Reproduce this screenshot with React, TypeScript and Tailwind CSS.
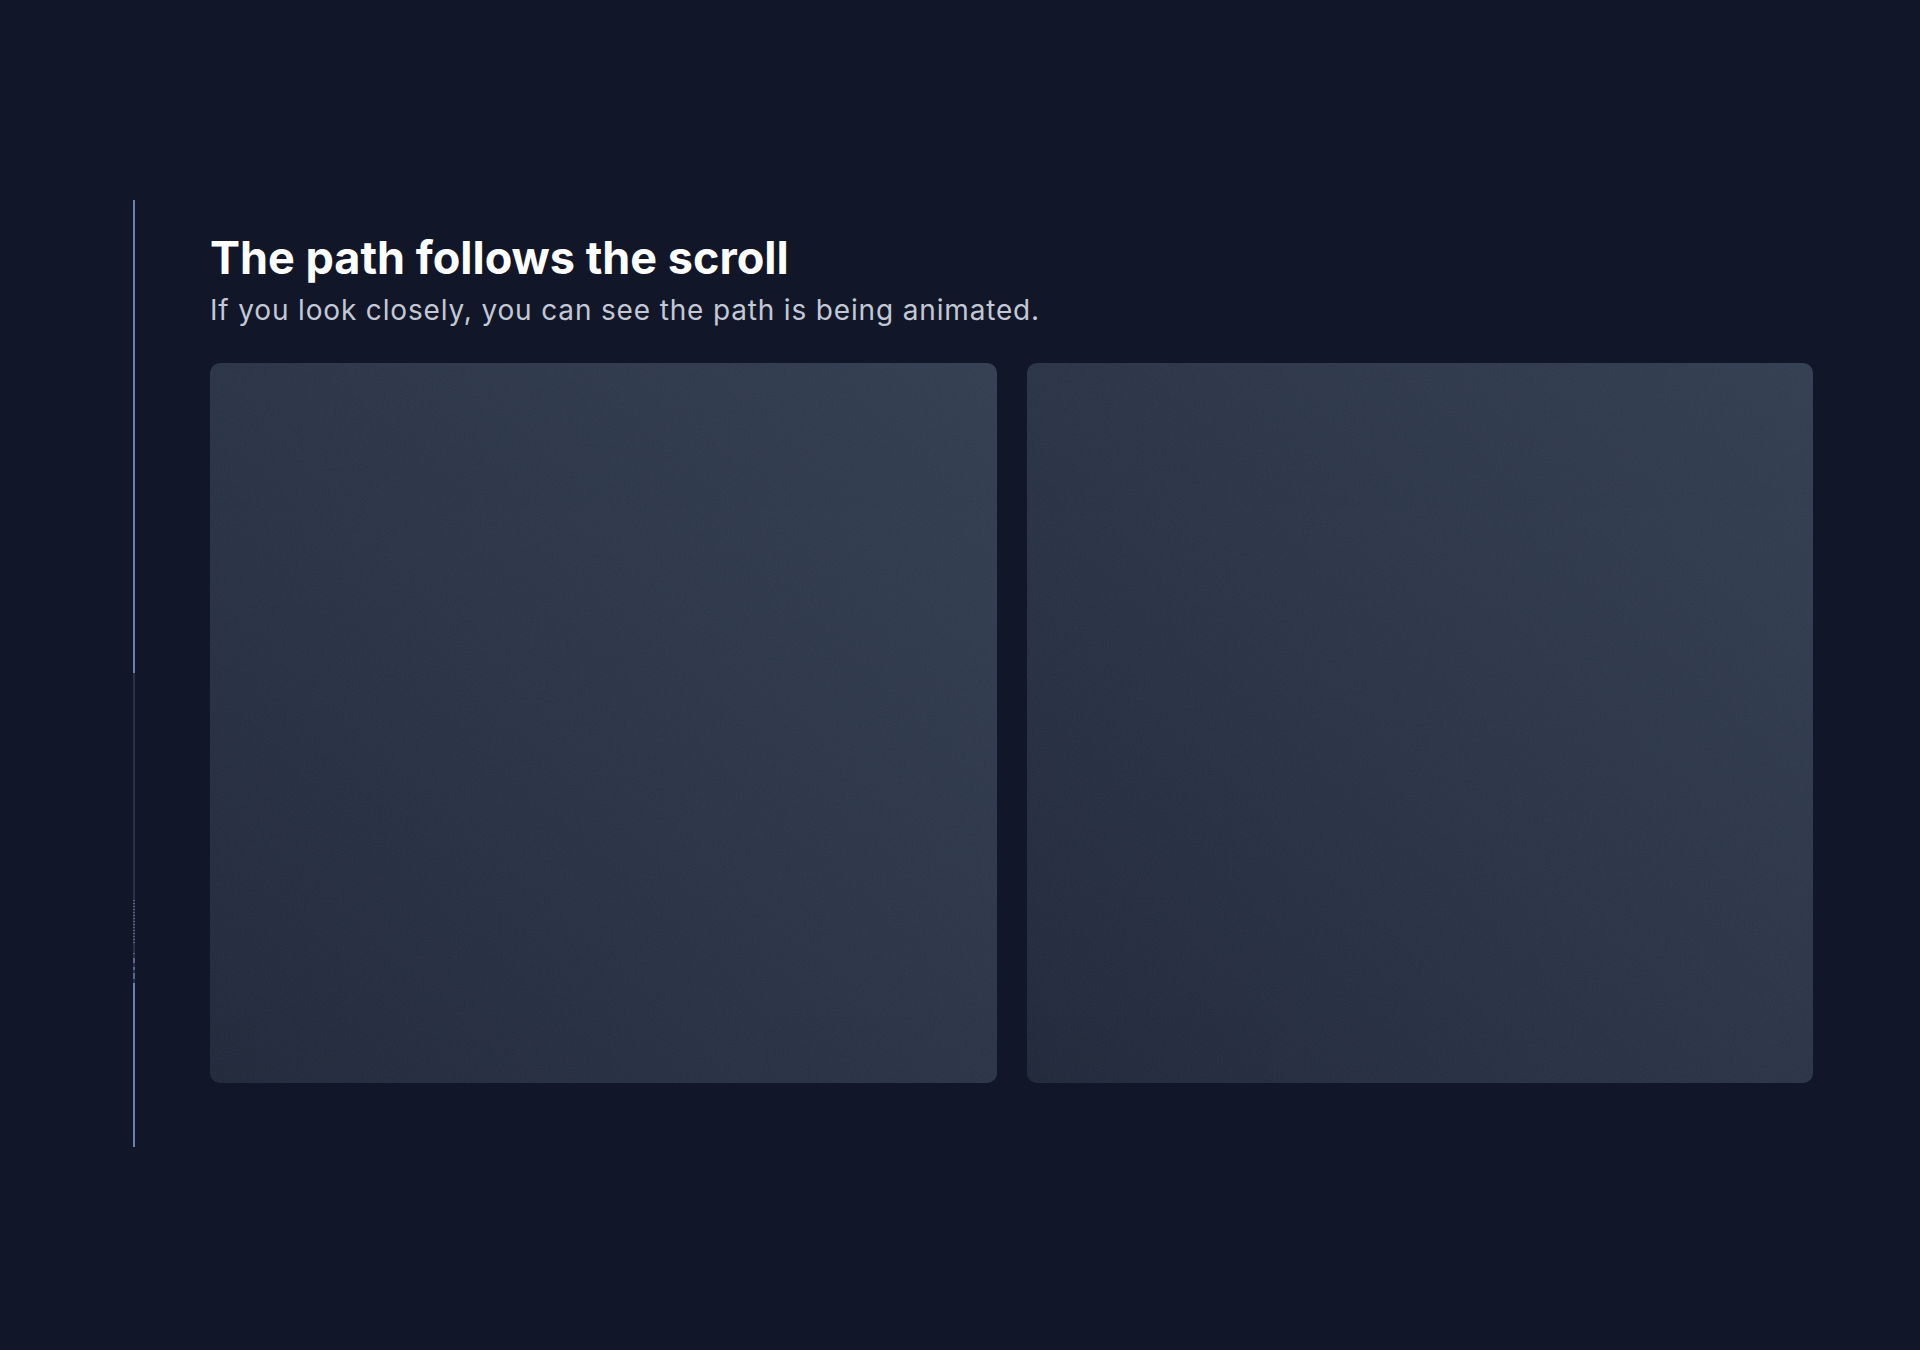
import React from "react";

const Noise: React.FC<{ id: string }> = ({ id }) => (
  <svg className="pointer-events-none absolute inset-0 h-full w-full opacity-[0.07]">
    <filter id={id}>
      <feTurbulence type="fractalNoise" baseFrequency="0.9" numOctaves="2" stitchTiles="stitch" />
    </filter>
    <rect width="100%" height="100%" filter={`url(#${id})`} />
  </svg>
);

const Card: React.FC<{ id: string }> = ({ id }) => (
  <div className="relative h-[720px] overflow-hidden rounded-[10px] bg-linear-to-tr from-[#1f2739] via-[#293346] to-[#323d51]">
    <Noise id={id} />
  </div>
);

// the scroll path on the left, partially drawn
const ScrollPath: React.FC = () => (
  <div className="flex w-[2px] shrink-0 flex-col">
    <div className="h-[473px] bg-[#6d7fae]" />
    <div className="h-[227px] bg-[#263247]" />
    <div
      className="h-[43px]"
      style={{
        backgroundImage:
          "repeating-linear-gradient(to bottom, #56668f 0px, #56668f 1px, #263247 1px, #263247 3px)",
      }}
    />
    <div className="flex h-[40px] flex-col bg-[#263247]">
      <div className="mt-[10px] h-[1px] bg-[#56668f]" />
      <div className="mt-[4px] h-[5px] bg-[#56668f]" />
      <div className="mt-[4px] h-[3px] bg-[#56668f]" />
      <div className="mt-[3px] h-[6px] bg-[#56668f]" />
    </div>
    <div className="h-[164px] bg-[#6d7fae]" />
  </div>
);

export default function App() {
  return (
    <div
      className="min-h-[1350px] bg-[#111729] text-white"
      style={{ fontFamily: "Inter, 'Noto Sans', sans-serif" }}
    >
      <div className="flex pl-[133px] pt-[200px]">
        <ScrollPath />
        <div className="ml-[75px] w-[1603px] pt-[30px]">
          <h1 className="text-[45px] font-bold leading-[56px] text-white">
            The path follows the scroll
          </h1>
          <p className="mt-[5px] text-[28px] leading-[39px] tracking-[0.03em] text-[#c3c8d4]">
            If you look closely, you can see the path is being animated.
          </p>
          <div className="mt-[33px] grid grid-cols-2 gap-[30px]">
            <Card id="noise-a" />
            <Card id="noise-b" />
          </div>
        </div>
      </div>
    </div>
  );
}
